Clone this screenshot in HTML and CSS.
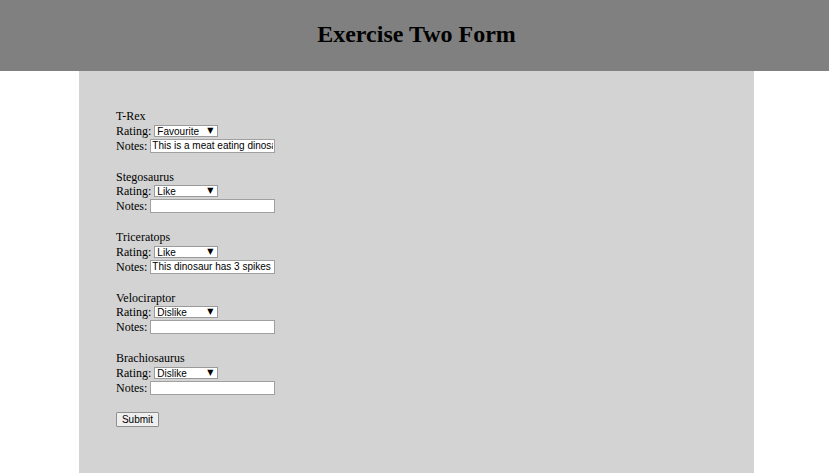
FILE: index.html
```html
<!DOCTYPE html>
<html>
<head>
<meta charset="utf-8">
<title>Exercise Two Form</title>
<link rel="stylesheet" href="styles.css">
</head>
<body>
<header class="top">
  <h1 class="title">Exercise Two Form</h1>
</header>
<main class="panel">
  <form class="form">
    <div class="dino">
      <div class="row name">T-Rex</div>
      <div class="row rating"><span class="label">Rating:</span><span class="sel"><select><option>Favourite</option><option>Like</option><option>Dislike</option></select><span class="arrow">&#9660;</span></span></div>
      <div class="row notes"><span class="label">Notes:</span><input class="txt" type="text" value="This is a meat eating dinosaur"></div>
    </div>
    <div class="dino">
      <div class="row name">Stegosaurus</div>
      <div class="row rating"><span class="label">Rating:</span><span class="sel"><select><option>Favourite</option><option selected>Like</option><option>Dislike</option></select><span class="arrow">&#9660;</span></span></div>
      <div class="row notes"><span class="label">Notes:</span><input class="txt" type="text" value=""></div>
    </div>
    <div class="dino">
      <div class="row name">Triceratops</div>
      <div class="row rating"><span class="label">Rating:</span><span class="sel"><select><option>Favourite</option><option selected>Like</option><option>Dislike</option></select><span class="arrow">&#9660;</span></span></div>
      <div class="row notes"><span class="label">Notes:</span><input class="txt" type="text" value="This dinosaur has 3 spikes on its head"></div>
    </div>
    <div class="dino">
      <div class="row name">Velociraptor</div>
      <div class="row rating"><span class="label">Rating:</span><span class="sel"><select><option>Favourite</option><option>Like</option><option selected>Dislike</option></select><span class="arrow">&#9660;</span></span></div>
      <div class="row notes"><span class="label">Notes:</span><input class="txt" type="text" value=""></div>
    </div>
    <div class="dino">
      <div class="row name">Brachiosaurus</div>
      <div class="row rating"><span class="label">Rating:</span><span class="sel"><select><option>Favourite</option><option>Like</option><option selected>Dislike</option></select><span class="arrow">&#9660;</span></span></div>
      <div class="row notes"><span class="label">Notes:</span><input class="txt" type="text" value=""></div>
    </div>
    <div class="actions"><button class="btn" type="button">Submit</button></div>
  </form>
</main>
</body>
</html>
```
FILE: styles.css
```css
html, body {
  margin: 0;
  padding: 0;
  background: #ffffff;
  font-family: "Liberation Serif", "Times New Roman", serif;
  color: #000;
}
.top {
  background: #808080;
  height: 71px;
  box-sizing: border-box;
  padding-top: 20px;
  padding-left: 4px;
}
.title {
  margin: 0;
  font-size: 24px;
  line-height: 28px;
  font-weight: bold;
  text-align: center;
}
.panel {
  display: block;
  margin-left: 79px;
  width: 675px;
  background: #d3d3d3;
  min-height: 402px;
  box-sizing: border-box;
  padding: 38px 37px 0;
}
.form {
  display: flex;
  flex-direction: column;
}
.dino {
  display: flex;
  flex-direction: column;
  margin-bottom: 16.5px;
}
.row {
  display: flex;
  align-items: center;
  font-size: 12px;
}
.name { height: 14px; line-height: 14px; }
.rating { height: 15px; }
.notes { height: 15px; }
.label { line-height: 14px; }
.rating .label { margin-right: 3px; }
.notes .label { margin-right: 3px; }
.sel {
  position: relative;
  display: inline-flex;
}
.sel select {
  -webkit-appearance: none;
  appearance: none;
  width: 64px;
  height: 12px;
  box-sizing: border-box;
  border: 1px solid #9a9a9a;
  border-radius: 0;
  background: #fff;
  font-family: "Liberation Sans", Arial, sans-serif;
  font-size: 10px;
  line-height: 10px;
  padding: 1px 0 0 2px;
  margin: 0;
  color: #000;
  outline: none;
}
.arrow {
  position: absolute;
  right: 5px;
  top: 1px;
  font-family: "DejaVu Sans", sans-serif;
  font-size: 8px;
  line-height: 10px;
  pointer-events: none;
}
.txt {
  width: 125px;
  height: 14px;
  box-sizing: border-box;
  border: 1px solid #a0a0a0;
  background: #fff;
  font-family: "Liberation Sans", Arial, sans-serif;
  font-size: 10px;
  padding: 0 1px;
  margin: 0;
  color: #000;
  outline: none;
}
.actions {
  display: flex;
}
.btn {
  width: 43px;
  height: 15px;
  box-sizing: border-box;
  border: 1px solid #8f8f8f;
  border-radius: 1px;
  background: #efefef;
  font-family: "Liberation Sans", Arial, sans-serif;
  font-size: 10px;
  line-height: 11px;
  padding: 0;
  margin: 0;
  color: #000;
}
```
